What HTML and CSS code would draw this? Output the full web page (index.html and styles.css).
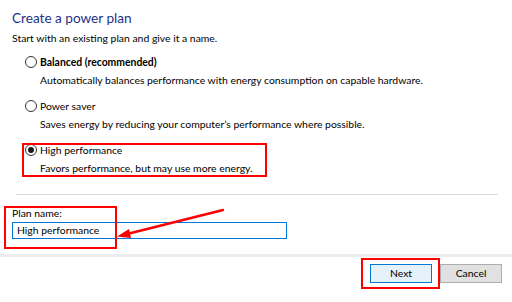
FILE: index.html
```html
<!DOCTYPE html>
<html>
<head>
<meta charset="utf-8">
<link rel="stylesheet" href="styles.css">
</head>
<body>
<div class="main">
  <h1 class="title">Create a power plan</h1>
  <p class="intro">Start with an existing plan and give it a name.</p>
  <div class="options">
    <div class="opt">
      <div class="opt-row"><span class="radio"></span><span class="opt-label bold">Balanced (recommended)</span></div>
      <div class="desc">Automatically balances performance with energy consumption on capable hardware.</div>
    </div>
    <div class="opt">
      <div class="opt-row"><span class="radio"></span><span class="opt-label">Power saver</span></div>
      <div class="desc">Saves energy by reducing your computer’s performance where possible.</div>
    </div>
    <div class="opt">
      <div class="opt-row"><span class="radio checked"></span><span class="opt-label">High performance</span></div>
      <div class="desc">Favors performance, but may use more energy.</div>
      <div class="mark mark-opt"></div>
    </div>
  </div>
  <div class="sep"></div>
  <div class="name">
    <div class="name-label">Plan name:</div>
    <div class="input">High performance</div>
    <div class="mark mark-name"></div>
    <svg class="arrow" width="110" height="32" viewBox="0 0 110 32">
      <line x1="108" y1="2" x2="12" y2="26" stroke="#ff0000" stroke-width="2.4" stroke-linecap="round"/>
      <polygon points="2,28.5 14,21 16,30" fill="#ff0000"/>
    </svg>
  </div>
</div>
<div class="footer">
  <div class="btn-wrap">
    <div class="btn primary">Next</div>
    <div class="mark mark-next"></div>
  </div>
  <div class="btn">Cancel</div>
</div>
</body>
</html>
```
FILE: styles.css
```css
html, body {
  margin: 0;
  padding: 0;
  background: #ffffff;
}
body {
  width: 512px;
  height: 302px;
  overflow: hidden;
  font-family: Lato, "Noto Sans", sans-serif;
  font-size: 10.4px;
  color: #000000;
}
.main {
  padding: 8px 14px 0 12px;
}
.title {
  margin: 0;
  font-size: 13.6px;
  font-weight: normal;
  line-height: 20px;
  color: #1e3287;
}
.intro {
  margin: 2px 0 0;
  line-height: 16px;
}
.options {
  margin: 8px 0 0 13px;
  display: flex;
  flex-direction: column;
  gap: 10px;
}
.opt {
  position: relative;
  display: flex;
  flex-direction: column;
  gap: 2px;
}
.opt-row {
  display: flex;
  align-items: center;
  gap: 3px;
  line-height: 16px;
}
.radio {
  width: 10px;
  height: 10px;
  border: 1px solid #333333;
  border-radius: 50%;
  box-sizing: content-box;
  position: relative;
  background: #fff;
}
.radio.checked::after {
  content: "";
  position: absolute;
  left: 2px;
  top: 2px;
  width: 6px;
  height: 6px;
  border-radius: 50%;
  background: #1a1a1a;
}
.bold {
  font-weight: bold;
}
.desc {
  padding-left: 15px;
  line-height: 16px;
}
.mark {
  position: absolute;
  border: 2px solid #ff0000;
  pointer-events: none;
}
.mark-opt {
  left: -3px;
  top: 1px;
  width: 241px;
  height: 30px;
}
.sep {
  margin: 18px 0 0 4px;
  height: 1px;
  background: #dadada;
}
.name {
  position: relative;
  margin-top: 10px;
  display: flex;
  flex-direction: column;
  gap: 1px;
}
.name-label {
  line-height: 16px;
}
.input {
  width: 269px;
  height: 15px;
  border: 1px solid #0078d7;
  padding-left: 4px;
  line-height: 15px;
}
.mark-name {
  left: -8px;
  top: 1px;
  width: 109px;
  height: 39px;
}
.arrow {
  position: absolute;
  left: 103px;
  top: 3px;
}
.footer {
  position: absolute;
  left: 0;
  right: 0;
  top: 254px;
  bottom: 0;
  border-top: 3px solid #ececec;
  display: flex;
  justify-content: flex-end;
  align-items: flex-start;
  gap: 8px;
  padding: 7px 10px 0 0;
}
.btn-wrap {
  position: relative;
}
.btn {
  width: 60px;
  height: 17px;
  line-height: 17px;
  text-align: center;
  background: #e1e1e1;
  border: 1px solid #adadad;
}
.btn.primary {
  background: #e5f1fb;
  border-color: #0078d7;
}
.mark-next {
  left: -9px;
  top: -6px;
  width: 75px;
  height: 27px;
}
```
